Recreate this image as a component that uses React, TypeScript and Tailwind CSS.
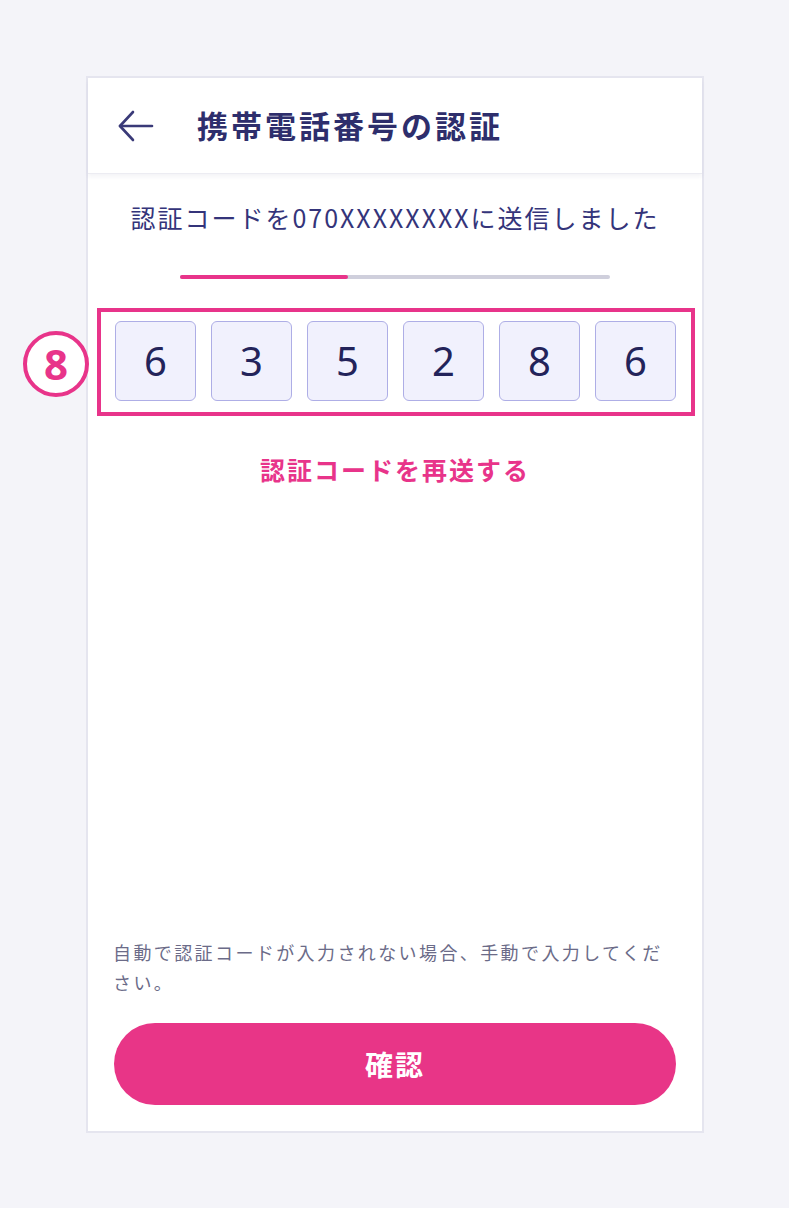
import React from "react";

const jp = { fontFamily: '"Noto Sans CJK JP", "Noto Sans", sans-serif' };

export default function App() {
  const digits = ["6", "3", "5", "2", "8", "6"];
  return (
    <div className="w-[789px] h-[1208px] bg-[#f4f4f9] relative overflow-hidden" style={jp}>
      <div className="absolute left-[86px] top-[76px] w-[618px] h-[1057px] border-2 border-[#e5e5ef] bg-white flex flex-col">
        {/* header */}
        <div className="h-[96px] flex items-center shrink-0 border-b border-[#ececf2] shadow-[0_3px_4px_rgba(40,40,90,0.05)] relative z-10">
          <svg width="40" height="34" viewBox="0 0 40 34" className="ml-[28px]" fill="none" stroke="#3a3a78" strokeWidth="2.6" strokeLinecap="round" strokeLinejoin="round">
            <path d="M36 17H4" />
            <path d="M17 3L4 17L17 31" />
          </svg>
          <div className="ml-[41px] text-[31px] font-semibold text-[#2e2e6c] tracking-[3px]">携帯電話番号の認証</div>
        </div>

        <div className="mt-[27px] text-center text-[25px] leading-[32px] tracking-[2px] text-[#34347a]">
          認証コードを070XXXXXXXXに送信しました
        </div>

        <div className="mt-[42px] mx-auto w-[430px] h-[4px] bg-[#cfcfdc] rounded-full flex">
          <div className="w-[168px] h-full bg-[#e8348a] rounded-full" />
        </div>

        <div className="mt-[29px] ml-[9px] w-[598px] h-[108px] border-4 border-[#e8348a] pl-[14px] pt-[9px] flex gap-[15px]">
          {digits.map((d, i) => (
            <div
              key={i}
              className="w-[81px] h-[80px] rounded-[6px] border-[1.5px] border-[#aeaee6] bg-[#f1f1fd] flex items-center justify-center text-[40px] text-[#23235a]"
              style={{ fontFamily: '"Noto Sans", sans-serif' }}
            >
              {d}
            </div>
          ))}
        </div>

        <div className="mt-[37px] text-center text-[25px] leading-[32px] tracking-[2px] font-bold text-[#e8348a]">
          認証コードを再送する
        </div>

        <div className="flex-1" />

        <div className="mx-[25px] text-[18px] leading-[30px] tracking-[2.4px] text-[#6b6b88]">
          自動で認証コードが入力されない場合、手動で入力してください。
        </div>

        <div className="mt-[26px] mb-[26px] mx-[26px] h-[82px] rounded-full bg-[#e83587] flex items-center justify-center text-white text-[28px] tracking-[2px] font-bold">
          確認
        </div>
      </div>

      <div className="absolute left-[23px] top-[331px] w-[66px] h-[66px] rounded-full border-4 border-[#e8348a] bg-white flex items-center justify-center text-[42px] leading-none font-bold text-[#e8348a]" style={{ fontFamily: '"Noto Sans", sans-serif' }}>
        8
      </div>
    </div>
  );
}
